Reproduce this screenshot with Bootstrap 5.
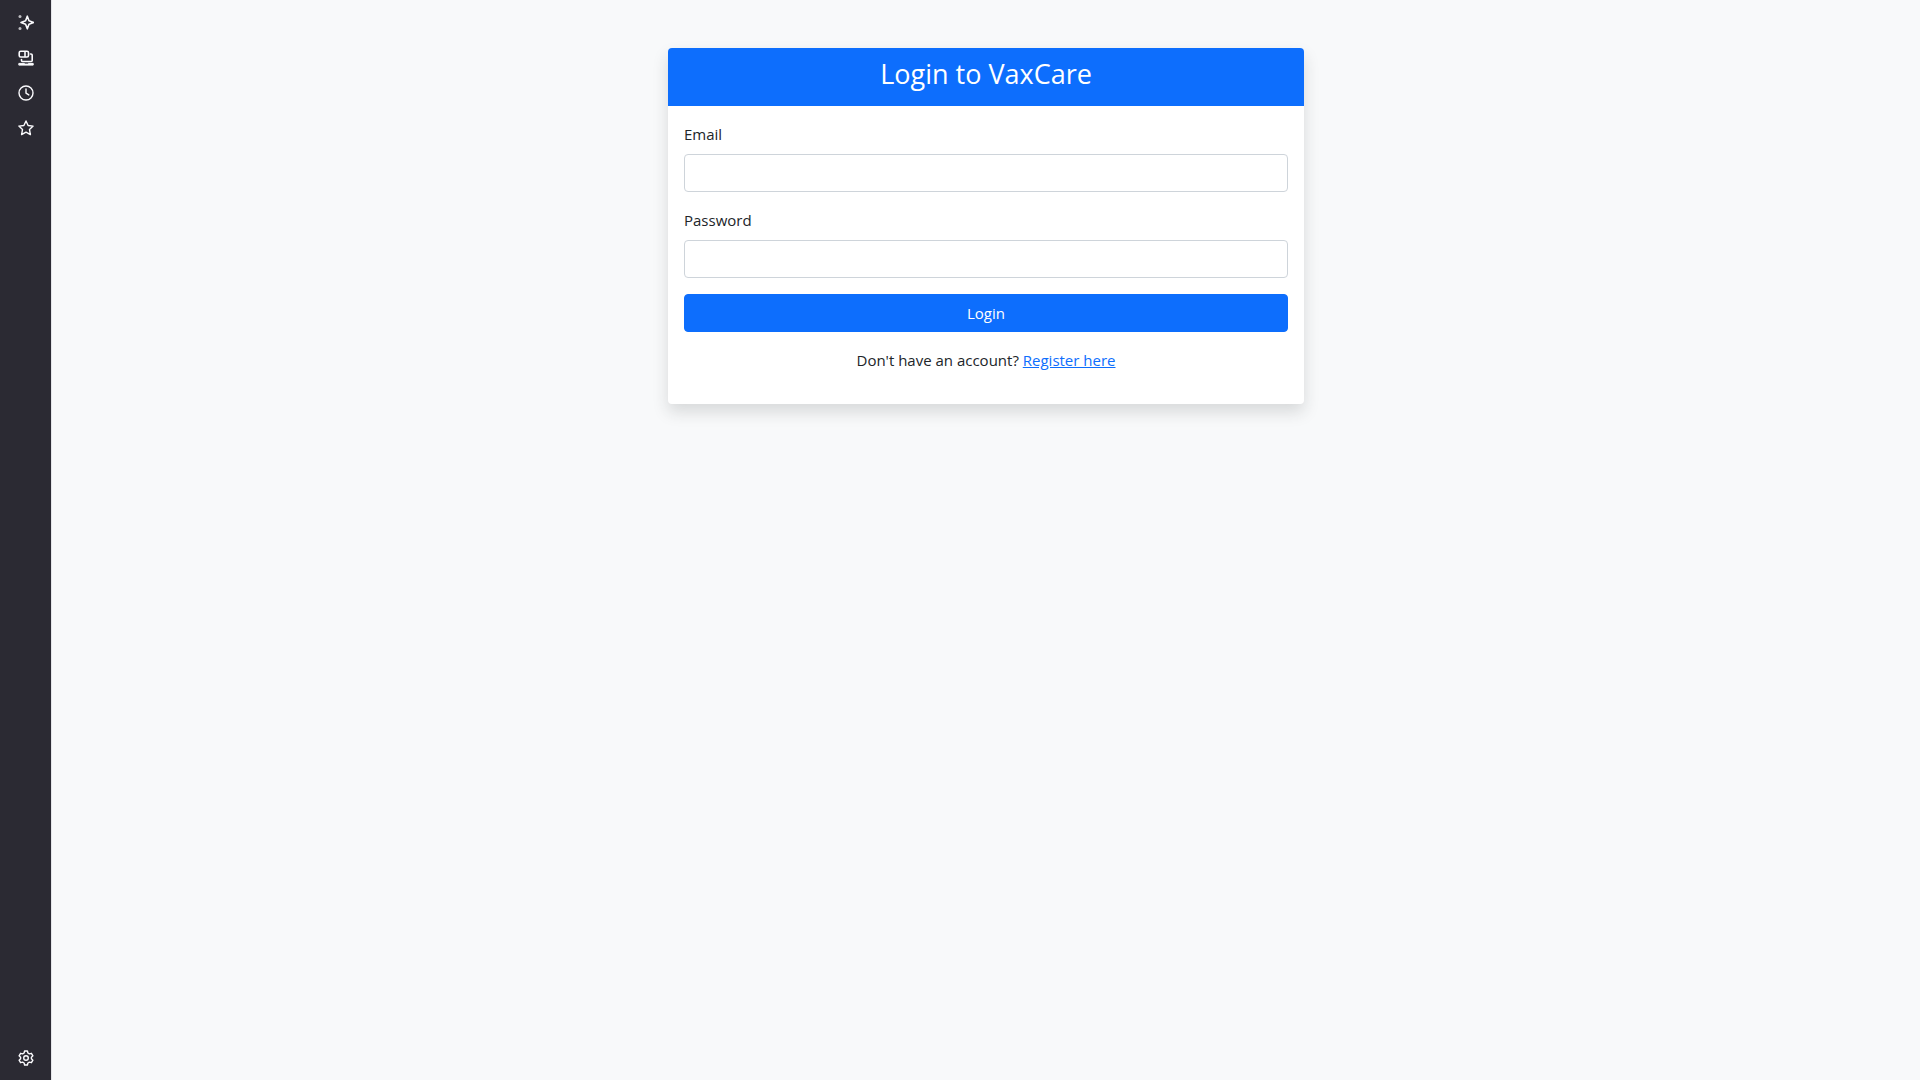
<!DOCTYPE html>
<html lang="en">
<head>
<meta charset="utf-8">
<meta name="viewport" content="width=device-width, initial-scale=1">
<title>Login - VaxCare</title>
<link href="https://cdn.jsdelivr.net/npm/bootstrap@5.3.0/dist/css/bootstrap.min.css" rel="stylesheet">
<style>
  :root { --edge: 4px; }
  body { font-family: "Segoe UI", "Open Sans", "Noto Sans", sans-serif; font-size: 15px; line-height: 24px; }
  .side-rail { width: 52px; background: #2b2a33; border-right: 1px solid #e4e5e8; padding: 5px 0; }
  .rail-btn { width: 36px; height: 35px; padding: 0; border: 0; background: transparent; color: #fbfbfe; display: flex; align-items: center; justify-content: center; }
  .rail-btn svg { width: 16px; height: 16px; fill: none; stroke: currentColor; stroke-width: 1.4; stroke-linejoin: round; stroke-linecap: round; }
  .login-card { border-radius: var(--edge); }
  .login-card .card-header { border-radius: var(--edge) var(--edge) 0 0; }
  .login-title { font-size: 27px; line-height: 36px; margin-bottom: 6px; }
  .login-card .form-control, .login-card .btn { height: 38px; border-radius: var(--edge); font-size: 15px; }
  .login-card .form-control { border-color: #ced4da; }
</style>
</head>
<body class="bg-light">
<div class="d-flex min-vh-100">
  <nav class="side-rail d-flex flex-column align-items-center flex-shrink-0" aria-label="Sidebar">
    <button class="rail-btn" type="button" aria-label="Assistant">
      <svg viewBox="0 0 16 16"><path stroke-width="1.6" d="M9.300 1.200L11 5.800L15.600 7.500L11 9.200L9.300 13.800L7.600 9.200L3 7.500L7.600 5.800z"/><g fill="currentColor" stroke="none" opacity=".7"><circle cx="2" cy="1.500" r="1.500"/><circle cx="2" cy="13.500" r="1.500"/></g></svg>
    </button>
    <button class="rail-btn" type="button" aria-label="Synced tabs">
      <svg viewBox="0 0 16 16"><rect x="1.200" y="1.200" width="9.300" height="5.800" rx="1.500" stroke-width="1.600"/><path d="M7 2v4.500M12.500 4h.5a1.200 1.200 0 0 1 1.200 1.200v5.300q0 1-1 1H4.500q-1 0-1-1V9.500" stroke-width="1.600"/><path d="M1.200 13.400h5l.8.700h2.500l.8-.7h4.900v1.700H1.200z" fill="currentColor" stroke-width="1"/></svg>
    </button>
    <button class="rail-btn" type="button" aria-label="History">
      <svg viewBox="0 0 16 16"><circle cx="8" cy="8" r="7"/><path d="M8 4v4.200l2.800 1.700"/></svg>
    </button>
    <button class="rail-btn" type="button" aria-label="Bookmarks">
      <svg viewBox="0 0 16 16"><path d="M8 1l2.100 4.500 5 .6-3.600 3.500.9 5L8 12.200l-4.400 2.400.9-5L.9 6.100l5-.6z"/></svg>
    </button>
    <button class="rail-btn mt-auto" type="button" aria-label="Settings">
      <svg viewBox="0 0 16 16"><path d="M6.600 1h2.800l.5 2 1.500.9 2-.6 1.500 2.500L13.400 7.200v1.600l1.500 1.400-1.500 2.500-2-.6-1.500.9-.5 2H6.600l-.5-2-1.500-.9-2 .6-1.500-2.500 1.500-1.400V7.200L1.100 5.800l1.500-2.500 2 .6L6.100 3z"/><circle cx="8" cy="8" r="2.300"/></svg>
    </button>
  </nav>
  <main class="flex-grow-1">
    <div class="container mt-5">
      <div class="row justify-content-center">
        <div class="col-md-6">
          <div class="card login-card border-0 shadow">
            <div class="card-header bg-primary text-white text-center border-0">
              <h3 class="login-title fw-normal">Login to VaxCare</h3>
            </div>
            <div class="card-body">
              <form>
                <div class="mb-3">
                  <label for="email" class="form-label">Email</label>
                  <input type="email" class="form-control" id="email">
                </div>
                <div class="mb-3">
                  <label for="password" class="form-label">Password</label>
                  <input type="password" class="form-control" id="password">
                </div>
                <button type="submit" class="btn btn-primary w-100">Login</button>
              </form>
              <p class="text-center mt-3 mb-3">Don't have an account? <a href="#register">Register here</a></p>
            </div>
          </div>
        </div>
      </div>
    </div>
  </main>
</div>
<script src="https://cdn.jsdelivr.net/npm/bootstrap@5.3.0/dist/js/bootstrap.bundle.min.js"></script>
</body>
</html>
